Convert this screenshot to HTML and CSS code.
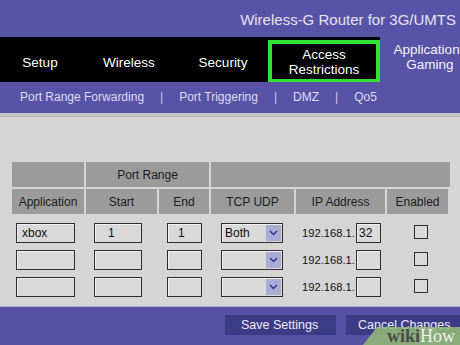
FILE: index.html
```html
<!DOCTYPE html>
<html>
<head>
<meta charset="utf-8">
<link rel="stylesheet" href="styles.css">
</head>
<body>
<div class="page">
  <header class="topbar">
    <div class="title">Wireless-G Router for 3G/UMTS</div>
  </header>
  <nav class="mainnav">
    <div class="tab tab-setup">Setup</div>
    <div class="tab tab-wireless">Wireless</div>
    <div class="tab tab-security">Security</div>
    <div class="tab tab-access">Access<br>Restrictions</div>
    <div class="tab tab-apps">Applications<br>Gaming</div>
  </nav>
  <nav class="subnav">
    <span class="sub">Port Range Forwarding</span>
    <span class="sep">|</span>
    <span class="sub">Port Triggering</span>
    <span class="sep">|</span>
    <span class="sub">DMZ</span>
    <span class="sep">|</span>
    <span class="sub">Qo5</span>
  </nav>
  <main class="content">
    <table class="ports">
      <colgroup>
        <col class="c-app"><col class="c-start"><col class="c-end"><col class="c-proto"><col class="c-ip"><col class="c-en">
      </colgroup>
      <tr class="head">
        <th></th>
        <th colspan="2">Port Range</th>
        <th colspan="4"></th>
      </tr>
      <tr class="head">
        <th>Application</th>
        <th>Start</th>
        <th>End</th>
        <th>TCP UDP</th>
        <th>IP Address</th>
        <th>Enabled</th>
      </tr>
      <tr class="row first">
        <td class="d-app"><span class="field w-app">xbox</span></td>
        <td class="d-start"><span class="field w-start">1</span></td>
        <td class="d-end"><span class="field w-end">1</span></td>
        <td class="d-proto"><span class="select"><span class="sel-text">Both</span><span class="arrow"><svg width="9" height="6" viewBox="0 0 9 6"><path d="M1 1 L4.5 4.5 L8 1" fill="none" stroke="#2b3080" stroke-width="1.4"/></svg></span></span></td>
        <td class="d-ip"><span class="ip">192.168.1.</span><span class="field w-ip">32</span></td>
        <td class="d-en"><span class="check"></span></td>
      </tr>
      <tr class="row">
        <td class="d-app"><span class="field w-app"></span></td>
        <td class="d-start"><span class="field w-start"></span></td>
        <td class="d-end"><span class="field w-end"></span></td>
        <td class="d-proto"><span class="select"><span class="sel-text"></span><span class="arrow"><svg width="9" height="6" viewBox="0 0 9 6"><path d="M1 1 L4.5 4.5 L8 1" fill="none" stroke="#2b3080" stroke-width="1.4"/></svg></span></span></td>
        <td class="d-ip"><span class="ip">192.168.1.</span><span class="field w-ip"></span></td>
        <td class="d-en"><span class="check"></span></td>
      </tr>
      <tr class="row">
        <td class="d-app"><span class="field w-app"></span></td>
        <td class="d-start"><span class="field w-start"></span></td>
        <td class="d-end"><span class="field w-end"></span></td>
        <td class="d-proto"><span class="select"><span class="sel-text"></span><span class="arrow"><svg width="9" height="6" viewBox="0 0 9 6"><path d="M1 1 L4.5 4.5 L8 1" fill="none" stroke="#2b3080" stroke-width="1.4"/></svg></span></span></td>
        <td class="d-ip"><span class="ip">192.168.1.</span><span class="field w-ip"></span></td>
        <td class="d-en"><span class="check"></span></td>
      </tr>
    </table>
  </main>
  <footer class="footer">
    <div class="btn btn-save">Save Settings</div>
    <div class="btn btn-cancel">Cancel Changes</div>
  </footer>
  <div class="watermark"><span class="wm-wiki">wiki</span><span class="wm-how">How</span></div>
</div>
</body>
</html>
```
FILE: styles.css
```css
html, body {
  margin: 0;
  padding: 0;
}
body {
  width: 460px;
  height: 345px;
  overflow: hidden;
  font-family: "Liberation Sans", Arial, sans-serif;
  background: #5753a6;
}
.page {
  position: relative;
  width: 460px;
  height: 345px;
  overflow: hidden;
  display: flex;
  flex-direction: column;
}
.topbar {
  height: 37px;
  background: #5853a7;
  display: flex;
  justify-content: flex-end;
  align-items: center;
  padding-right: 4px;
}
.title {
  color: #e4e3f3;
  font-size: 15px;
  padding-top: 2px;
}
.mainnav {
  height: 45px;
  display: flex;
  background: #5853a7;
}
.tab {
  background: #000;
  color: #fff;
  font-size: 13.5px;
  display: flex;
  align-items: center;
  justify-content: center;
  text-align: center;
  line-height: 15px;
  flex: none;
  padding-top: 5px;
  box-sizing: border-box;
}
.tab-setup { width: 80px; }
.tab-wireless { width: 98px; }
.tab-security { width: 90px; }
.tab-access {
  width: 112px;
  border: 4px solid #34e234;
  box-sizing: border-box;
  margin-top: 3px;
  height: 43px;
  padding-top: 0;
  box-shadow: 0 -3px 0 #000;
}
.tab-apps {
  width: 100px;
  background: transparent;
  color: #f2f2fb;
  padding-top: 0;
  padding-bottom: 6px;
}
.subnav {
  height: 31px;
  background: #5853a7;
  display: flex;
  align-items: center;
  padding-left: 20px;
  font-size: 12px;
  color: #dcdcf2;
  padding-bottom: 1px;
  box-sizing: border-box;
}
.sep {
  margin: 0 16px;
  color: #c8c8e8;
}
.content {
  height: 193px;
  background: #d5d5d5;
  border-top: 3px solid #c7c9c7;
  box-shadow: inset 0 1px 0 #b7b8b7;
  box-sizing: border-box;
  padding-top: 44px;
  padding-left: 10px;
}
.ports {
  border-collapse: separate;
  border-spacing: 2px;
  table-layout: fixed;
  width: 440px;
}
.c-app { width: 72px; }
.c-start { width: 71px; }
.c-end { width: 50px; }
.c-proto { width: 83px; }
.c-ip { width: 89px; }
.c-en { width: 61px; }
.head th {
  background: #9b9b9b;
  color: #1c1c1c;
  font-weight: normal;
  font-size: 12px;
  height: 25px;
  padding: 0;
  text-align: center;
}
.row td {
  height: 25px;
  padding: 0;
  vertical-align: bottom;
  white-space: nowrap;
}
.row.first td {
  padding-top: 2px;
}
.field {
  display: inline-block;
  box-sizing: border-box;
  height: 20px;
  border: 1px solid #2e2e2e;
  box-shadow: inset 1px 1px 0 #f0f0f0;
  background: #d9d9d9;
  font-size: 12px;
  line-height: 18px;
  color: #111;
  vertical-align: bottom;
}
.d-app { padding-left: 4px !important; }
.d-start { padding-left: 8px !important; }
.d-end { padding-left: 8px !important; }
.d-proto { padding-left: 10px !important; }
.d-ip { padding-left: 6px !important; }
.d-en { padding-left: 27px !important; }
.w-app { width: 59px; padding-left: 5px; }
.w-start { width: 48px; padding-left: 13px; }
.w-end { width: 35px; padding-left: 10px; }
.w-ip { width: 25px; padding-left: 2px; }
.ip {
  font-size: 11.2px;
  color: #111;
  display: inline-block;
  width: 54px;
  line-height: 20px;
  vertical-align: bottom;
}
.select {
  display: inline-flex;
  box-sizing: border-box;
  width: 62px;
  height: 20px;
  border: 1px solid #2e2e2e;
  box-shadow: inset 1px 1px 0 #f0f0f0;
  background: #d9d9d9;
  padding: 1px;
  vertical-align: bottom;
}
.sel-text {
  flex: 1;
  font-size: 12px;
  line-height: 16px;
  padding-left: 2px;
  color: #111;
}
.arrow {
  width: 15px;
  background: #a8add6;
  display: flex;
  align-items: center;
  justify-content: center;
}
.check {
  display: inline-block;
  box-sizing: border-box;
  width: 14px;
  height: 14px;
  border: 1px solid #2e2e2e;
  background: #d9d9d9;
  margin-bottom: 4px;
  vertical-align: bottom;
}
.footer {
  flex: 1;
  background: #5651a4;
  border-top: 1px solid #a9a6d8;
  display: flex;
  gap: 10px;
  padding-left: 225px;
  padding-top: 8px;
  box-sizing: border-box;
}
.btn {
  flex: none;
  height: 20px;
  background: #3d3b86;
  color: #ecebf8;
  font-size: 12.5px;
  line-height: 20px;
  box-sizing: border-box;
}
.btn-save { width: 111px; padding-left: 16px; }
.btn-cancel { width: 130px; padding-left: 12px; }
.watermark {
  position: absolute;
  right: 0;
  bottom: 0;
  width: 97px;
  height: 18px;
  background: rgba(148, 188, 118, 0.85);
  clip-path: polygon(14px 0, 100% 0, 100% 100%, 0 100%);
  font-family: "Liberation Serif", "Times New Roman", serif;
  font-size: 18px;
  line-height: 18px;
  padding-left: 24px;
  box-sizing: border-box;
}
.wm-wiki {
  color: #4a4a4a;
  font-weight: bold;
}
.wm-how {
  color: #f0f0e8;
}
```
